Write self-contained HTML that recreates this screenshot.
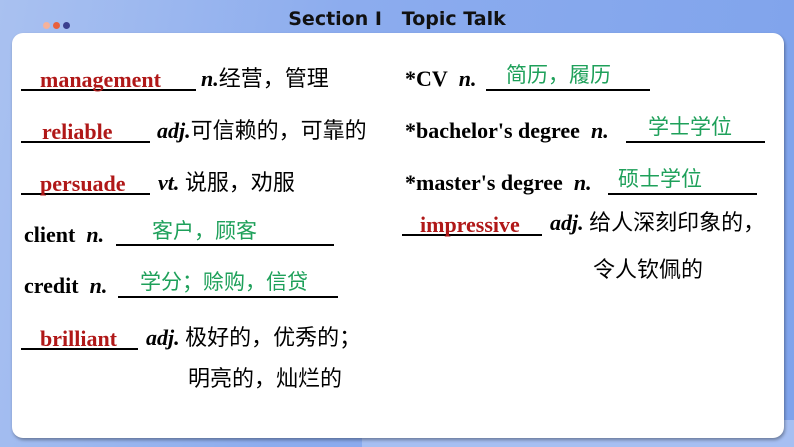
<!DOCTYPE html>
<html><head><meta charset="utf-8"><style>
body{margin:0;width:794px;height:447px;overflow:hidden;position:relative;background:#7fa3ec;font-family:"Liberation Serif","Noto Serif CJK SC",serif;}
.bg1{position:absolute;left:0;top:0;width:794px;height:447px;background:linear-gradient(100deg,#a9c1f0 0%,#8cacee 40%,#7fa3ec 100%);}
.bot{position:absolute;left:362px;top:420px;width:432px;height:27px;background:#a6bff2;}
.card{position:absolute;left:12px;top:33px;width:772px;height:405px;background:#fff;border-radius:11px;box-shadow:1px 2px 3px rgba(0,0,0,.35);}
.title{position:absolute;left:0;width:794px;top:8px;text-align:center;font:bold 19px "DejaVu Sans","Liberation Sans",sans-serif;color:#111;}
.d{position:absolute;top:22px;width:7px;height:7px;border-radius:50%;}
.t{position:absolute;font-size:22px;line-height:22px;white-space:nowrap;color:#000;}
.b{font-weight:bold;}
.r{color:#b01818;font-weight:bold;}
.g{color:#1ea05a;font-family:"Liberation Sans","Noto Sans CJK SC",sans-serif;font-size:21px;}
.cn{font-family:"Liberation Serif","Noto Sans CJK SC",sans-serif;}
.u{position:absolute;height:1.5px;background:#000;}
i{font-weight:bold;}
</style></head><body>
<div class="bg1"></div><div class="bot"></div>
<div class="d" style="left:43px;background:#f5b29a"></div>
<div class="d" style="left:53px;background:#e8603c"></div>
<div class="d" style="left:63px;background:#3a3f8f"></div>
<div class="title">Section Ⅰ&nbsp;&nbsp; Topic Talk</div>
<div class="card"></div>

<div class="u" style="left:21px;width:175px;top:89px"></div>
<div class="t r" style="left:40px;top:69px">management</div>
<div class="t cn" style="left:201px;top:68px"><i>n.</i>经营，管理</div>

<div class="u" style="left:21px;width:129px;top:141px"></div>
<div class="t r" style="left:42px;top:121px">reliable</div>
<div class="t cn" style="left:157px;top:120px"><i>adj.</i>可信赖的，可靠的</div>

<div class="u" style="left:21px;width:129px;top:193px"></div>
<div class="t r" style="left:40px;top:173px">persuade</div>
<div class="t cn" style="left:158px;top:172px"><i>vt.</i> 说服，劝服</div>

<div class="t b" style="left:24px;top:224px">client&nbsp; <i>n.</i></div>
<div class="u" style="left:116px;width:218px;top:244px"></div>
<div class="t g" style="left:152px;top:221px">客户，顾客</div>

<div class="t b" style="left:24px;top:275px">credit&nbsp; <i>n.</i></div>
<div class="u" style="left:118px;width:220px;top:296px"></div>
<div class="t g" style="left:140px;top:272px">学分；赊购，信贷</div>

<div class="u" style="left:21px;width:117px;top:348px"></div>
<div class="t r" style="left:40px;top:328px">brilliant</div>
<div class="t cn" style="left:146px;top:327px"><i>adj.</i> 极好的，优秀的；</div>
<div class="t cn" style="left:188px;top:368px">明亮的，灿烂的</div>

<div class="t b" style="left:405px;top:68px">*CV&nbsp; <i>n.</i></div>
<div class="u" style="left:486px;width:164px;top:89px"></div>
<div class="t g" style="left:506px;top:65px">简历，履历</div>

<div class="t b" style="left:405px;top:120px">*bachelor's degree&nbsp; <i>n.</i></div>
<div class="u" style="left:626px;width:139px;top:141px"></div>
<div class="t g" style="left:648px;top:117px">学士学位</div>

<div class="t b" style="left:405px;top:172px">*master's degree&nbsp; <i>n.</i></div>
<div class="u" style="left:608px;width:149px;top:193px"></div>
<div class="t g" style="left:618px;top:169px">硕士学位</div>

<div class="u" style="left:402px;width:140px;top:234px"></div>
<div class="t r" style="left:420px;top:214px">impressive</div>
<div class="t cn" style="left:550px;top:212px"><i>adj.</i> 给人深刻印象的，</div>
<div class="t cn" style="left:593px;top:259px">令人钦佩的</div>
</body></html>
